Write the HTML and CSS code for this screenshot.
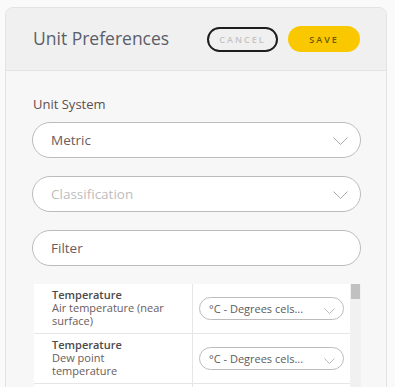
FILE: index.html
```html
<!DOCTYPE html>
<html lang="en">
<head>
    <meta charset="UTF-8">
    <meta name="viewport" content="width=device-width, initial-scale=1.0">
    <title>Unit Preferences</title>
    <link rel="stylesheet" href="styles.css">
</head>
<body>
    <div class="card">
        <div class="card-header">
            <h2>Unit Preferences</h2>
            <button class="btn btn-cancel">CANCEL</button>
            <button class="btn btn-save">SAVE</button>
        </div>

        <div class="card-body">
            <label class="field-label">Unit System</label>
            <div class="select">
                <span>Metric</span>
                <svg class="chevron" width="15" height="8" viewBox="0 0 15 8"><path d="M0.5 0.5 L7.5 7.5 L14.5 0.5" fill="none" stroke="#aaa" stroke-width="1"/></svg>
            </div>
            <div class="select placeholder">
                <span>Classification</span>
                <svg class="chevron" width="15" height="8" viewBox="0 0 15 8"><path d="M0.5 0.5 L7.5 7.5 L14.5 0.5" fill="none" stroke="#aaa" stroke-width="1"/></svg>
            </div>
            <div class="select">
                <span>Filter</span>
            </div>

            <div class="table-wrap">
                <div class="table">
                    <div class="row">
                        <div class="cell-name">
                            <div class="name-title">Temperature</div>
                            <div class="name-sub">Air temperature (near surface)</div>
                        </div>
                        <div class="cell-unit">
                            <div class="unit-select">
                                <span>°C - Degrees cels...</span>
                                <svg width="11" height="6" viewBox="0 0 11 6"><path d="M0.5 0.5 L5.5 5.5 L10.5 0.5" fill="none" stroke="#bbb" stroke-width="1"/></svg>
                            </div>
                        </div>
                    </div>
                    <div class="row">
                        <div class="cell-name">
                            <div class="name-title">Temperature</div>
                            <div class="name-sub">Dew point temperature</div>
                        </div>
                        <div class="cell-unit">
                            <div class="unit-select">
                                <span>°C - Degrees cels...</span>
                                <svg width="11" height="6" viewBox="0 0 11 6"><path d="M0.5 0.5 L5.5 5.5 L10.5 0.5" fill="none" stroke="#bbb" stroke-width="1"/></svg>
                            </div>
                        </div>
                    </div>
                    <div class="row-rest">
                        <div class="cell-name"></div>
                    </div>
                </div>
                <div class="scrollbar"><div class="thumb"></div></div>
            </div>
        </div>
    </div>
</body>
</html>
```

FILE: styles.css
```css
body {
    margin: 0;
    padding: 7px 8px 0 5px;
    background: #fafafa;
    font-family: "Open Sans", Arial, sans-serif;
    color: #5c5c5c;
    height: 387px;
    overflow: hidden;
}
.card {
    border: 1px solid #e3e3e3;
    border-radius: 8px;
    background: #f7f7f7;
    overflow: hidden;
    height: 420px;
}
.card-header {
    display: flex;
    align-items: center;
    height: 62px;
    padding: 0 26px 0 27px;
    background: #f0f0f0;
    border-bottom: 1px solid #e3e3e3;
}
h2 {
    margin: 0 0 3px 0;
    flex: 1;
    font-size: 17.5px;
    font-weight: 400;
    color: #5a5e68;
}
.btn {
    font-family: inherit;
    font-size: 9px;
    font-weight: 600;
    letter-spacing: 2px;
    border-radius: 14px;
    cursor: pointer;
    padding: 0;
}
.btn-cancel {
    width: 71px;
    height: 25px;
    border: 2px solid #1e1e1e;
    background: transparent;
    color: #c4c4c4;
    margin-right: 10px;
}
.btn-save {
    width: 72px;
    height: 26px;
    border: none;
    background: #f9c800;
    color: #6a5800;
}
.card-body {
    padding: 25px 25px 0 26px;
}
.field-label {
    display: block;
    margin: 0 0 9px 1px;
    font-size: 13px;
    line-height: 17px;
    color: #5e4e4e;
}
.select {
    display: flex;
    align-items: center;
    justify-content: space-between;
    height: 34px;
    padding: 0 12px 0 18px;
    border: 1px solid #bcbcbc;
    border-radius: 18px;
    background: #fff;
    font-size: 13.5px;
    color: #6a5c5c;
    margin-bottom: 18px;
}
.select.placeholder {
    color: #bdbdbd;
}
.chevron {
    margin-top: 1px;
}
.table-wrap {
    display: flex;
    margin-left: 2px;
}
.table {
    flex: 1;
    background: #fff;
}
.row {
    display: flex;
    height: 49px;
    border-bottom: 1px solid #e6e6e6;
}
.row-rest {
    display: flex;
    height: 40px;
}
.cell-name {
    width: 140px;
    padding: 4px 0 0 18px;
    border-right: 1px solid #e6e6e6;
    font-size: 11px;
    line-height: 13px;
}
.name-title {
    font-weight: 600;
    color: #4a4a4a;
}
.name-sub {
    color: #6a5c5c;
    padding-right: 22px;
}
.cell-unit {
    flex: 1;
    display: flex;
    align-items: center;
    padding: 0 6px;
}
.unit-select {
    flex: 1;
    display: flex;
    align-items: center;
    justify-content: space-between;
    height: 21px;
    padding: 0 8px 0 9px;
    border: 1px solid #bcbcbc;
    border-radius: 12px;
    font-size: 11px;
    color: #5c5c5c;
}
.unit-select svg {
    margin-top: 4px;
}
.scrollbar {
    width: 11px;
    background: #f1f1f1;
}
.thumb {
    height: 15px;
    margin: 0 1px;
    background: #c1c1c1;
}
```
